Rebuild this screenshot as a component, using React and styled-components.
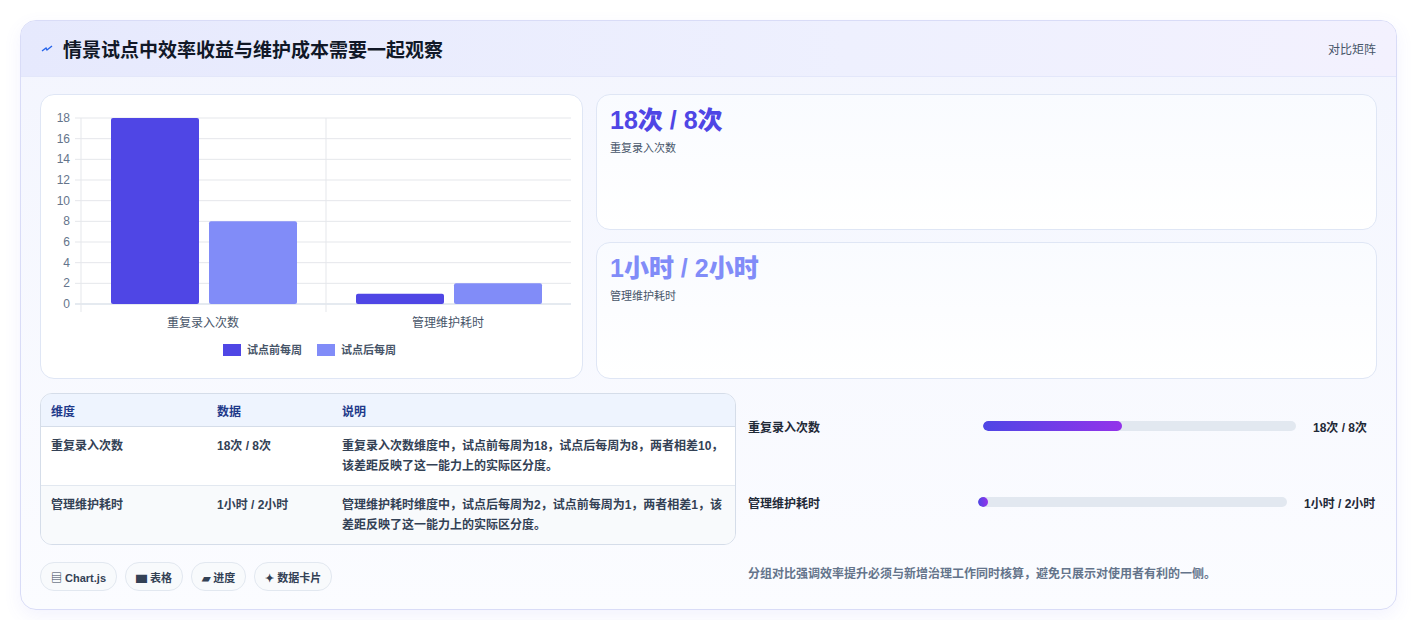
import React from 'react';
import styled, { createGlobalStyle } from 'styled-components';

const Global = createGlobalStyle`
  body {
    margin: 0;
    background: #ffffff;
    font-family: "Liberation Sans", "Noto Sans CJK SC", sans-serif;
    color: #0f172a;
  }
`;

const Page = styled.div`
  padding: 20px 20px 20px 20px;
  width: 1377px;
`;

const Panel = styled.section`
  border: 1px solid #d9dcf7;
  border-radius: 16px;
  background: linear-gradient(180deg, #f3f5fe 0%, #fbfcff 100%);
  box-shadow: 0 6px 18px rgba(99, 102, 241, 0.08);
  overflow: hidden;
`;

const Header = styled.header`
  height: 55px;
  display: flex;
  align-items: center;
  justify-content: space-between;
  padding: 0 20px;
  background: linear-gradient(90deg, #e6e9fd 0%, #eef0fe 60%, #f3f1fe 100%);
  border-bottom: 1px solid #e3e7fa;
`;

const Title = styled.h1`
  margin: 0;
  font-size: 19px;
  font-weight: 700;
  color: #111827;
  display: flex;
  align-items: center;
  gap: 10px;
`;

const Tag = styled.span`
  font-size: 12px;
  color: #475569;
`;

const Body = styled.div`
  padding: 17px 19px 18px 19px;
  display: flex;
  flex-direction: column;
  gap: 14px;
`;

const TopGrid = styled.div`
  display: grid;
  grid-template-columns: 543px 1fr;
  gap: 13px;
`;

const Card = styled.div`
  background: linear-gradient(180deg, #f9fbff 0%, #ffffff 100%);
  border: 1px solid #dfe6f5;
  border-radius: 14px;
`;

const ChartCard = styled(Card)`
  height: 283px;
  background: #fff;
`;

const Stack = styled.div`
  display: flex;
  flex-direction: column;
  gap: 12px;
`;

const StatCard = styled(Card)`
  height: ${p => p.$h}px;
  padding: 12px 13px;
  box-sizing: border-box;
`;

const StatValue = styled.div`
  font-size: 25px;
  font-weight: 800;
  color: ${p => p.$c};
  line-height: 1.1;
`;

const StatLabel = styled.div`
  font-size: 11px;
  color: #475569;
  margin-top: 4px;
`;

const BottomGrid = styled.div`
  display: grid;
  grid-template-columns: 696px 1fr;
  gap: 12px;
`;

const Left = styled.div`
  display: flex;
  flex-direction: column;
  gap: 17px;
`;

const Table = styled.table`
  width: 100%;
  border-collapse: separate;
  border-spacing: 0;
  border: 1px solid #d5dde9;
  border-radius: 12px;
  overflow: hidden;
  font-size: 12px;
  background: #f8fafc;
`;

const Th = styled.th`
  text-align: left;
  font-weight: 700;
  color: #1e3a8a;
  background: #eef4fe;
  height: 32px;
  padding: 0 10px;
  border-bottom: 1px solid #d5dde9;
  width: ${p => p.$w || 'auto'};
`;

const Td = styled.td`
  padding: 9px 10px;
  font-weight: 700;
  color: #334155;
  line-height: 20px;
  vertical-align: top;
  border-top: ${p => (p.$first ? 'none' : '1px solid #e2e8f0')};
  background: ${p => (p.$first ? '#ffffff' : '#f8fafc')};
`;

const Chips = styled.div`
  display: flex;
  gap: 8px;
`;

const Chip = styled.span`
  height: 27px;
  padding: 0 10px;
  border: 1px solid #e2e8f0;
  border-radius: 14px;
  background: #f8fafc;
  font-size: 11px;
  font-weight: 700;
  color: #334155;
  display: flex;
  align-items: center;
  gap: 3px;
`;

const Right = styled.div`
  display: flex;
  flex-direction: column;
  padding-top: 23px;
`;

const ProgRow = styled.div`
  display: grid;
  grid-template-columns: ${p => p.$cols};
  align-items: center;
  height: 20px;
  margin-bottom: 56px;
  font-size: 12px;
  font-weight: 700;
  color: #1f2937;
`;

const Track = styled.div`
  height: 10px;
  border-radius: 5px;
  background: #e2e8f0;
  margin-right: 17px;
  overflow: hidden;
`;

const Fill = styled.div`
  height: 100%;
  border-radius: 5px;
  background: linear-gradient(90deg, #4f46e5, #9333ea);
`;

const Note = styled.p`
  margin: -4px 0 0;
  font-size: 12px;
  font-weight: 700;
  color: #64748b;
`;

const Chart = () => {
  const y0 = 209, unit = 186 / 18;
  const ticks = [0, 2, 4, 6, 8, 10, 12, 14, 16, 18];
  const bars = [
    { x: 70, v: 18, c: '#4f46e5' }, { x: 168, v: 8, c: '#818cf8' },
    { x: 315, v: 1, c: '#4f46e5' }, { x: 413, v: 2, c: '#818cf8' },
  ];
  return (
    <svg width="541" height="281" viewBox="0 0 541 281">
      {ticks.map(t => (
        <g key={t}>
          <line x1="34" x2="530" y1={y0 - t * unit} y2={y0 - t * unit} stroke={t === 0 ? '#cbd5e1' : '#e5e7eb'} />
          <text x="29" y={y0 - t * unit + 4} textAnchor="end" fontSize="12" fill="#64748b" fontFamily="Liberation Sans">{t}</text>
        </g>
      ))}
      <line x1="40" x2="40" y1="23" y2="217" stroke="#e5e7eb" />
      <line x1="285" x2="285" y1="23" y2="217" stroke="#e5e7eb" />
      {bars.map((b, i) => (
        <rect key={i} x={b.x} y={y0 - b.v * unit} width="88" height={b.v * unit} rx="2" fill={b.c} />
      ))}
      <text x="162" y="232" textAnchor="middle" fontSize="12" fill="#475569">重复录入次数</text>
      <text x="407" y="232" textAnchor="middle" fontSize="12" fill="#475569">管理维护耗时</text>
      <rect x="182" y="249" width="18" height="12" fill="#4f46e5" />
      <text x="206" y="259" fontSize="11" fill="#475569" fontWeight="700">试点前每周</text>
      <rect x="276" y="249" width="18" height="12" fill="#818cf8" />
      <text x="300" y="259" fontSize="11" fill="#475569" fontWeight="700">试点后每周</text>
    </svg>
  );
};

export default function App() {
  return (
    <Page>
      <Global />
      <Panel>
        <Header>
          <Title>
            <svg width="12" height="12" viewBox="0 0 12 12"><path d="M1 8 L5 5 L6 7 L11 3" stroke="#2563eb" strokeWidth="1.4" fill="none" /></svg>
            情景试点中效率收益与维护成本需要一起观察
          </Title>
          <Tag>对比矩阵</Tag>
        </Header>
        <Body>
          <TopGrid>
            <ChartCard><Chart /></ChartCard>
            <Stack>
              <StatCard $h={136}>
                <StatValue $c="#4f46e5">18次 / 8次</StatValue>
                <StatLabel>重复录入次数</StatLabel>
              </StatCard>
              <StatCard $h={137}>
                <StatValue $c="#818cf8">1小时 / 2小时</StatValue>
                <StatLabel>管理维护耗时</StatLabel>
              </StatCard>
            </Stack>
          </TopGrid>
          <BottomGrid>
            <Left>
              <Table>
                <thead>
                  <tr><Th $w="146px">维度</Th><Th $w="105px">数据</Th><Th>说明</Th></tr>
                </thead>
                <tbody>
                  <tr>
                    <Td $first>重复录入次数</Td><Td $first>18次 / 8次</Td>
                    <Td $first>重复录入次数维度中，试点前每周为18，试点后每周为8，两者相差10，该差距反映了这一能力上的实际区分度。</Td>
                  </tr>
                  <tr>
                    <Td>管理维护耗时</Td><Td>1小时 / 2小时</Td>
                    <Td>管理维护耗时维度中，试点后每周为2，试点前每周为1，两者相差1，该差距反映了这一能力上的实际区分度。</Td>
                  </tr>
                </tbody>
              </Table>
              <Chips>
                <Chip>▤ Chart.js</Chip>
                <Chip>▆ 表格</Chip>
                <Chip>▰ 进度</Chip>
                <Chip>✦ 数据卡片</Chip>
              </Chips>
            </Left>
            <Right>
              <ProgRow $cols="235px 1fr 64px">
                <span>重复录入次数</span>
                <Track><Fill style={{ width: `${(8 / 18) * 100}%` }} /></Track>
                <span>18次 / 8次</span>
              </ProgRow>
              <ProgRow $cols="230px 1fr 73px">
                <span>管理维护耗时</span>
                <Track><Fill style={{ width: '10px' }} /></Track>
                <span>1小时 / 2小时</span>
              </ProgRow>
              <Note>分组对比强调效率提升必须与新增治理工作同时核算，避免只展示对使用者有利的一侧。</Note>
            </Right>
          </BottomGrid>
        </Body>
      </Panel>
    </Page>
  );
}
